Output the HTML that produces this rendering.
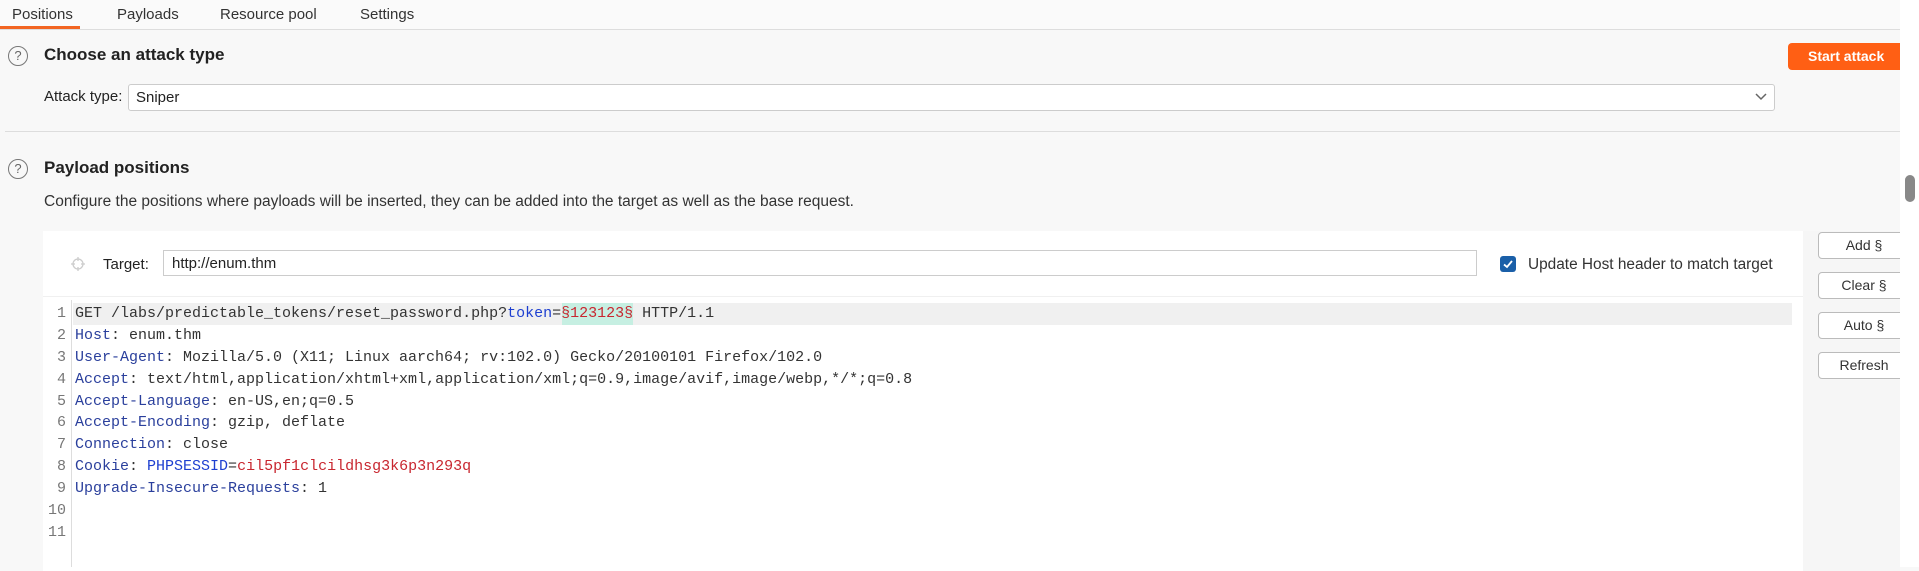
<!DOCTYPE html>
<html><head><meta charset="utf-8"><style>
body{margin:0;width:1919px;height:567px;background:#f8f8f8;font-family:"Liberation Sans",sans-serif;color:#222;position:relative;overflow:hidden}
.a{position:absolute;white-space:nowrap}
.tab{font-size:15px;top:6px;color:#333}
.q{width:18px;height:18px;border:1.5px solid #777;border-radius:50%;font-size:13px;color:#666;text-align:center;line-height:18px}
.h{font-size:17px;font-weight:bold;color:#222}
.btn{left:1818px;width:90px;height:25px;border:1px solid #bbb;border-radius:4px;background:#fff;font-size:14px;text-align:center;line-height:25px;color:#333}
.code{font-family:"Liberation Mono",monospace;font-size:15px;left:75px;color:#333}
.ln{font-family:"Liberation Mono",monospace;font-size:15px;color:#777;width:66px;text-align:right;left:0}
.k{color:#2a3f9c}.r{color:#c8262f}.b{color:#1d3fd0}
</style></head><body>
<div class="a" style="left:0;top:0;width:1900px;height:29px;background:#fafafa;border-bottom:1px solid #ddd"></div>
<div class="a tab" style="left:12px">Positions</div>
<div class="a" style="left:0;top:26px;width:80px;height:3px;background:#f26522"></div>
<div class="a tab" style="left:117px">Payloads</div>
<div class="a tab" style="left:220px">Resource pool</div>
<div class="a tab" style="left:360px">Settings</div>

<div class="a q" style="left:8px;top:46px">?</div>
<div class="a h" style="left:44px;top:45px">Choose an attack type</div>
<div class="a" style="left:1788px;top:43px;width:120px;height:27px;background:#ff5f14;border-radius:4px;color:#fff;font-weight:bold;font-size:14px;line-height:27px;padding-left:20px">Start attack</div>
<div class="a" style="left:44px;top:88px;font-size:15px">Attack type:</div>
<div class="a" style="left:128px;top:84px;height:25px;border:1px solid #ccc;border-radius:3px;background:#fff;font-size:15px;line-height:25px;padding-left:7px;width:1638px">Sniper</div>
<svg class="a" style="left:1754px;top:92px" width="14" height="10"><path d="M2 2 L7 7 L12 2" fill="none" stroke="#666" stroke-width="1.5"/></svg>
<div class="a" style="left:5px;top:131px;width:1895px;height:1px;background:#ddd"></div>

<div class="a q" style="left:8px;top:159px">?</div>
<div class="a h" style="left:44px;top:158px">Payload positions</div>
<div class="a" style="left:44px;top:193px;font-size:15.5px;color:#333">Configure the positions where payloads will be inserted, they can be added into the target as well as the base request.</div>

<div class="a" style="left:43px;top:231px;width:1760px;height:340px;background:#fff"></div>
<div class="a" style="left:1803px;top:231px;width:97px;height:340px;background:#f6f6f6"></div>
<div class="a" style="left:43px;top:296px;width:1760px;height:1px;background:#f0f0f0"></div>
<svg class="a" style="left:71px;top:257px" width="14" height="14"><circle cx="7" cy="7" r="5" fill="none" stroke="#ccc" stroke-width="1.3"/><path d="M7 0v4M7 10v4M0 7h4M10 7h4" stroke="#ccc" stroke-width="1.3"/></svg>
<div class="a" style="left:103px;top:256px;font-size:15px">Target:</div>
<div class="a" style="left:163px;top:250px;width:1314px;height:26px;border:1px solid #ccc;background:#fff;font-size:15px;line-height:26px;padding-left:8px;box-sizing:border-box">http://enum.thm</div>
<div class="a" style="left:1500px;top:256px;width:16px;height:16px;background:#1a5fa8;border-radius:3px"></div>
<svg class="a" style="left:1500px;top:256px" width="16" height="16"><path d="M4 8.5 L7 11 L12 5" fill="none" stroke="#fff" stroke-width="1.8"/></svg>
<div class="a" style="left:1528px;top:256px;font-size:15.4px;color:#333">Update Host header to match target</div>

<div class="a btn" style="top:232px">Add §</div>
<div class="a btn" style="top:272px">Clear §</div>
<div class="a btn" style="top:312px">Auto §</div>
<div class="a btn" style="top:352px">Refresh</div>

<div class="a" style="left:71px;top:300px;width:1px;height:267px;background:#ddd"></div>
<div class="a" style="left:73px;top:303px;width:1719px;height:22px;background:#f0f0f0"></div>
<div class="a" style="left:562px;top:303px;width:71px;height:22px;background:#c6efe2"></div>

<div class="a ln" style="top:305px">1</div><div class="a code" style="top:305px">GET /labs/predictable_tokens/reset_password.php?<span class="b">token</span>=<span class="r">§123123§</span> HTTP/1.1</div>
<div class="a ln" style="top:327px">2</div><div class="a code" style="top:327px"><span class="k">Host</span>: enum.thm</div>
<div class="a ln" style="top:349px">3</div><div class="a code" style="top:349px"><span class="k">User-Agent</span>: Mozilla/5.0 (X11; Linux aarch64; rv:102.0) Gecko/20100101 Firefox/102.0</div>
<div class="a ln" style="top:371px">4</div><div class="a code" style="top:371px"><span class="k">Accept</span>: text/html,application/xhtml+xml,application/xml;q=0.9,image/avif,image/webp,*/*;q=0.8</div>
<div class="a ln" style="top:393px">5</div><div class="a code" style="top:393px"><span class="k">Accept-Language</span>: en-US,en;q=0.5</div>
<div class="a ln" style="top:414px">6</div><div class="a code" style="top:414px"><span class="k">Accept-Encoding</span>: gzip, deflate</div>
<div class="a ln" style="top:436px">7</div><div class="a code" style="top:436px"><span class="k">Connection</span>: close</div>
<div class="a ln" style="top:458px">8</div><div class="a code" style="top:458px"><span class="k">Cookie</span>: <span class="b">PHPSESSID</span>=<span class="r">cil5pf1clcildhsg3k6p3n293q</span></div>
<div class="a ln" style="top:480px">9</div><div class="a code" style="top:480px"><span class="k">Upgrade-Insecure-Requests</span>: 1</div>
<div class="a ln" style="top:502px">10</div>
<div class="a ln" style="top:524px">11</div>

<div class="a" style="left:1900px;top:0;width:19px;height:567px;background:#fff"></div>
<div class="a" style="left:1905px;top:175px;width:10px;height:27px;background:#888;border-radius:5px"></div>
</body></html>
